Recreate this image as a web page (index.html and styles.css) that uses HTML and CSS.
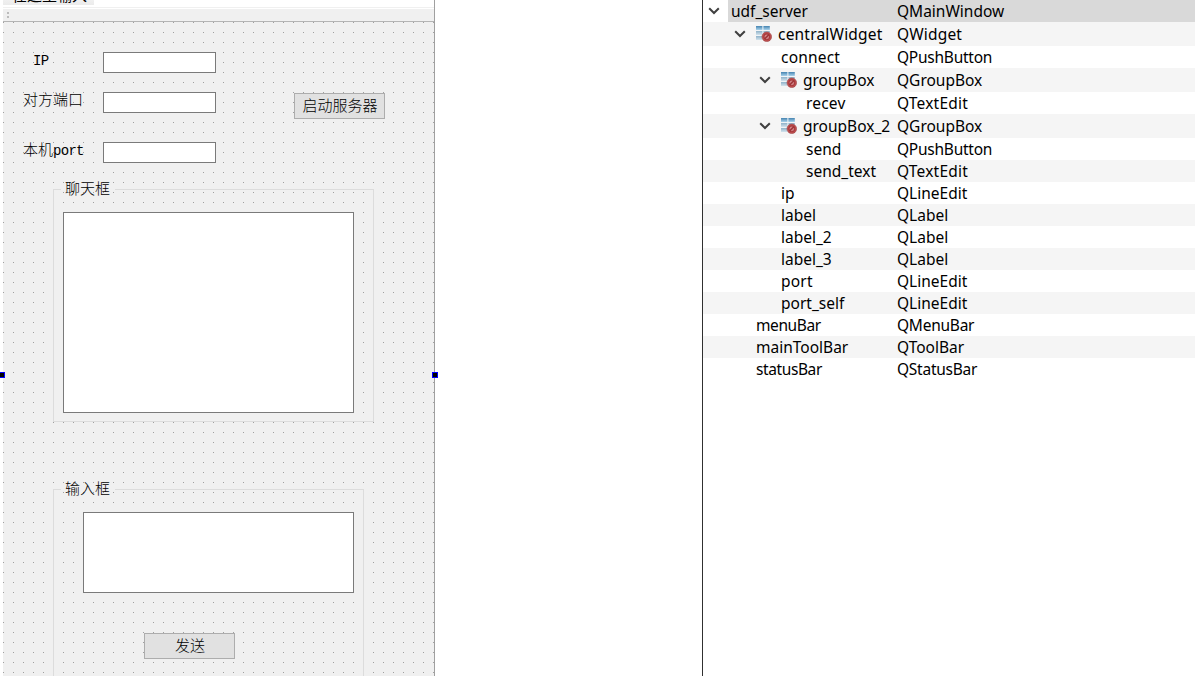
FILE: index.html
```html
<!DOCTYPE html>
<html lang="zh-CN">
<head>
<meta charset="utf-8">
<title>udf_server</title>
<link rel="stylesheet" href="styles.css">
</head>
<body>
<svg class="defs" width="0" height="0" aria-hidden="true">
  <defs>
    <linearGradient id="cell" x1="0" y1="0" x2="0" y2="1"><stop offset="0" stop-color="#4583b0"/><stop offset="1" stop-color="#a9d3ec"/></linearGradient>
    <linearGradient id="pale" x1="0" y1="0" x2="0" y2="1"><stop offset="0" stop-color="#8fb2c9"/><stop offset="1" stop-color="#d3e3ed"/></linearGradient>
    <symbol id="chevron" viewBox="0 0 12 8"><path d="M1.2 1.2 6 6 10.8 1.2" fill="none" stroke="#404040" stroke-width="2"/></symbol>
    <symbol id="nolayout" viewBox="0 0 16 16">
      <rect x="0" y="0" width="14" height="14" fill="#f0f4f7"/>
      <g fill="url(#cell)">
        <rect x="0" y="0" width="6.4" height="4"/><rect x="7.4" y="0" width="6.4" height="4"/>
      </g>
      <g fill="url(#pale)">
        <rect x="0" y="5" width="6.4" height="4"/><rect x="7.4" y="5" width="6.4" height="4"/>
        <rect x="0" y="10" width="6.4" height="4"/>
      </g>
      <circle cx="10.8" cy="10.8" r="4.8" fill="#c05050" stroke="#9c4143" stroke-width=".6"/>
      <circle cx="10.8" cy="10.8" r="2.9" fill="#cf8284" stroke="#a83a3d" stroke-width="1.1"/>
      <path d="M8.8 12.8 12.8 8.8" stroke="#9b3033" stroke-width="1.3"/>
    </symbol>
  </defs>
</svg>
<div class="app">
  <section class="designer">
    <div class="form">
      <div class="menubar"><span class="menu-item">在这里输入</span></div>
      <div class="toolbar"><i></i><i></i></div>
      <div class="central">
        <div class="settings">
          <div class="fields">
            <label class="field"><span class="name ip"><span class="latin">IP</span></span><input class="line-edit"></label>
            <label class="field"><span class="name">对方端口</span><input class="line-edit"></label>
            <label class="field last"><span class="name">本机<span class="latin">port</span></span><input class="line-edit"></label>
          </div>
          <button class="push start">启动服务器</button>
        </div>
        <div class="group chat"><span class="title">聊天框</span><div class="text-edit"></div></div>
        <div class="group entry"><span class="title">输入框</span><div class="text-edit"></div><button class="push">发送</button></div>
      </div>
    </div>
    <b class="handle left"></b><b class="handle right"></b>
  </section>
  <section class="tree">
    <div class="row selected"><div class="obj d0"><svg class="chev"><use href="#chevron"/></svg><span class="root">udf_server</span></div><span class="cls">QMainWindow</span></div>
    <div class="row tall"><div class="obj d1"><svg class="chev"><use href="#chevron"/></svg><svg class="ico"><use href="#nolayout"/></svg><span class="wide">centralWidget</span></div><span class="cls wide">QWidget</span></div>
    <div class="row"><div class="obj leaf2 wide">connect</div><span class="cls tight">QPushButton</span></div>
    <div class="row tall"><div class="obj d2"><svg class="chev"><use href="#chevron"/></svg><svg class="ico"><use href="#nolayout"/></svg><span>groupBox</span></div><span class="cls">QGroupBox</span></div>
    <div class="row"><div class="obj leaf3 wide">recev</div><span class="cls wide">QTextEdit</span></div>
    <div class="row tall"><div class="obj d2"><svg class="chev"><use href="#chevron"/></svg><svg class="ico"><use href="#nolayout"/></svg><span>groupBox_2</span></div><span class="cls">QGroupBox</span></div>
    <div class="row"><div class="obj leaf3">send</div><span class="cls tight">QPushButton</span></div>
    <div class="row"><div class="obj leaf3">send_text</div><span class="cls wide">QTextEdit</span></div>
    <div class="row"><div class="obj leaf2">ip</div><span class="cls">QLineEdit</span></div>
    <div class="row"><div class="obj leaf2">label</div><span class="cls">QLabel</span></div>
    <div class="row"><div class="obj leaf2">label_2</div><span class="cls">QLabel</span></div>
    <div class="row"><div class="obj leaf2">label_3</div><span class="cls">QLabel</span></div>
    <div class="row"><div class="obj leaf2 wide">port</div><span class="cls">QLineEdit</span></div>
    <div class="row"><div class="obj leaf2">port_self</div><span class="cls">QLineEdit</span></div>
    <div class="row"><div class="obj leaf1 menu">menuBar</div><span class="cls tight">QMenuBar</span></div>
    <div class="row"><div class="obj leaf1">mainToolBar</div><span class="cls">QToolBar</span></div>
    <div class="row"><div class="obj leaf1 menu">statusBar</div><span class="cls tight">QStatusBar</span></div>
  </section>
</div>
</body>
</html>
```
FILE: styles.css
```css
* { box-sizing: border-box; }
body { margin: 0; background: #fff; color: #000; overflow: hidden; }
.defs { display: block; }
.app { display: flex; width: 1195px; height: 676px; overflow: hidden; }

.designer { position: relative; width: 702px; height: 676px; overflow: hidden; padding-left: 3px; font: 300 15px/20px "Noto Sans CJK SC", sans-serif; }
.form { display: flex; flex-direction: column; width: 432px; height: 676px; border-right: 1px solid #a0a0a0; background: #f0f0f0; }
.menubar { display: flex; align-items: flex-end; height: 9px; padding-bottom: 4px; background: linear-gradient(#fff 7px, #f0f0f0 7px, #f0f0f0 8px, #fff 8px); overflow: hidden; }
.menu-item { height: 20px; width: 91px; padding-left: 9px; line-height: 20px; font-weight: 400; background: linear-gradient(#fff, #ebebeb); }
.toolbar { display: flex; flex-direction: column; gap: 2px; height: 13px; padding: 3px 0 0 4px; border-bottom: 1px solid #b4b4b4; }
.toolbar i { width: 2px; height: 2px; background: #bcbcbc; }

/* design grid: one dot every 10px */
.central {
  flex: 1; display: flex; flex-direction: column; padding-left: 50px; overflow: hidden;
  background:
    linear-gradient(90deg, transparent 1px, #f0f0f0 1px) 0 0 / 10px 10px,
    linear-gradient(#a0a0a0 1px, #f0f0f0 1px) 0 0 / 10px 10px;
}

.settings { display: flex; flex: none; align-items: flex-start; height: 167px; margin-left: -50px; padding: 30px 0 0 20px; }
.fields { width: 271px; }
.field { display: flex; align-items: flex-start; height: 40px; }
.field.last { margin-top: 10px; }
.name { width: 80px; margin-top: -3px; white-space: nowrap; }
.latin { font-family: "Liberation Mono", monospace; font-size: 14px; font-weight: 400; letter-spacing: -.7px; line-height: 16px; }
.name.ip { padding-left: 10px; }
.line-edit { width: 113px; height: 21px; border: 1px solid #7a7a7a; border-radius: 0; padding: 0; background: #fff; outline: 0; }
.push { width: 91px; height: 26px; padding: 0 0 2px 1px; border: 1px solid #adadad; border-radius: 0; background: #e1e1e1; color: #000; font: 300 15px/20px "Noto Sans CJK SC", sans-serif; }
.start { margin-top: 41px; }

.group { position: relative; flex: none; border: 1px solid #dcdcdc; }
.title { position: absolute; left: 7px; top: -12px; width: 54px; height: 20px; padding-left: 4px; line-height: 20px; white-space: nowrap; background: linear-gradient(#f0f0f0, #f0f0f0) 0 11px / 100% 1px no-repeat; }
.text-edit { border: 1px solid #7a7a7a; background: #fff; }
.chat { width: 321px; height: 233px; padding: 22px 0 0 9px; }
.chat .text-edit { width: 291px; height: 201px; }
.entry { width: 311px; height: 220px; margin-top: 67px; padding: 22px 0 0 29px; }
.entry .text-edit { width: 271px; height: 81px; }
.entry .push { display: block; margin: 40px 0 0 61px; }

.handle { position: absolute; top: 372px; width: 6px; height: 6px; border: 1px solid #0000ff; background: #000; }
.handle.left { left: -1px; }
.handle.right { left: 432px; }

.tree { width: 493px; border-left: 1px solid #303030; font: 15.5px/22px "Noto Sans", sans-serif; }
.row { display: flex; align-items: center; height: 22px; white-space: nowrap; }
.row.tall { height: 24px; }
.row:nth-child(even) { background: #f5f5f5; }
.row.selected { background: linear-gradient(90deg, #fff 25px, #d9d9d9 25px); }
.obj { display: flex; align-items: center; width: 194px; }
.chev { width: 12px; height: 8px; flex: none; }
.ico { width: 16px; height: 16px; flex: none; margin: 0 6px 0 10px; }
.d0 { padding-left: 5px; }
.root { margin-left: 11px; }
.d1 { padding-left: 31px; }
.d2 { padding-left: 56px; }
.leaf1 { padding-left: 53px; }
.leaf2 { padding-left: 78px; }
.leaf3 { padding-left: 103px; }
.wide { letter-spacing: .2px; }
.tight { letter-spacing: -.25px; }
.menu { letter-spacing: -.4px; }
```
